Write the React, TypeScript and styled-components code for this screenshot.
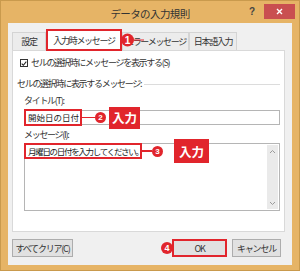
import React from 'react';
import styled, { createGlobalStyle } from 'styled-components';

const RED = '#e1252c';
const FRAME = '#e6b466';

const GlobalStyle = createGlobalStyle`
  html, body {
    margin: 0;
    padding: 0;
    background: #fff;
  }
  body {
    font-family: "Noto Sans CJK JP", "Noto Sans", sans-serif;
    color: #222;
  }
`;

const tabs = [
  { label: '設定', width: 34 },
  { label: '入力時メッセージ', width: 76, active: true },
  { label: 'エラーメッセージ', width: 67 },
  { label: '日本語入力', width: 48 },
];

const App: React.FC = () => {
  return (
    <>
      <GlobalStyle />
      <Window>
        <TitleBar>
          <span />
          <Title>データの入力規則</Title>
          <TitleActions>
            <HelpMark>?</HelpMark>
            <CloseButton>
              <svg width="7" height="7" viewBox="0 0 7 7">
                <path d="M1 1L6 6M6 1L1 6" stroke="#fff" strokeWidth="1.4" />
              </svg>
            </CloseButton>
          </TitleActions>
        </TitleBar>

        <Body>
          <TabRow>
            {tabs.map((tab) => (
              <Tab key={tab.label} $width={tab.width} $active={!!tab.active}>
                {tab.label}
                {tab.active && (
                  <TabCallout>
                    <NumBadge $size={13}>1</NumBadge>
                    <Line $width={10} />
                  </TabCallout>
                )}
              </Tab>
            ))}
          </TabRow>

          <Panel>
            <CheckRow>
              <CheckBox>
                <svg width="7" height="7" viewBox="0 0 7 7">
                  <path d="M0.8 3.6L2.7 5.5L6.2 1.3" stroke="#222" strokeWidth="1.2" fill="none" />
                </svg>
              </CheckBox>
              <LabelText>セルの選択時にメッセージを表示する(S)</LabelText>
            </CheckRow>

            <GroupHeader>
              <LabelText>セルの選択時に表示するメッセージ:</LabelText>
              <GroupLine />
            </GroupHeader>

            <Fields>
              <LabelText>タイトル(T):</LabelText>
              <TitleInput>
                <Marked $width={58} $height={17} $shift={-1}>
                  <MarkText $spacing={0}>開始日の日付</MarkText>
                  <Callout>
                    <Line $width={13} />
                    <NumBadge $size={11}>2</NumBadge>
                    <InputTag $gap={3} $w={31} $h={22}>入力</InputTag>
                  </Callout>
                </Marked>
              </TitleInput>

              <FieldLabel>メッセージ(I):</FieldLabel>
              <MessageArea>
                <MessageBody>
                  <Marked $width={118} $height={16} $shift={-1}>
                    <MarkText $spacing={-1.3}>月曜日の日付を入力してください。</MarkText>
                    <Callout>
                      <Line $width={10} />
                      <NumBadge $size={11}>3</NumBadge>
                      <InputTag $gap={11} $w={35} $h={24}>入力</InputTag>
                    </Callout>
                  </Marked>
                </MessageBody>
                <ScrollBar>
                  <svg width="7" height="5" viewBox="0 0 7 5">
                    <path d="M1 4L3.5 1.5L6 4" stroke="#9a9a9a" strokeWidth="1" fill="none" />
                  </svg>
                  <svg width="7" height="5" viewBox="0 0 7 5">
                    <path d="M1 1L3.5 3.5L6 1" stroke="#9a9a9a" strokeWidth="1" fill="none" />
                  </svg>
                </ScrollBar>
              </MessageArea>
            </Fields>
          </Panel>

          <ButtonRow>
            <DialogButton $width={61}>すべてクリア(C)</DialogButton>
            <RightButtons>
              <DialogButton $width={55} $marked>
                OK
                <OkBadge>
                  <NumBadge $size={12}>4</NumBadge>
                </OkBadge>
              </DialogButton>
              <DialogButton $width={49}>キャンセル</DialogButton>
            </RightButtons>
          </ButtonRow>
        </Body>
      </Window>
    </>
  );
};

const Window = styled.div`
  width: 300px;
  height: 271px;
  box-sizing: border-box;
  background: ${FRAME};
  border: 1px solid #c99a4d;
  display: flex;
  flex-direction: column;
`;

const TitleBar = styled.div`
  height: 22px;
  display: grid;
  grid-template-columns: 1fr auto 1fr;
  align-items: center;
`;

const Title = styled.div`
  font-size: 10.5px;
  letter-spacing: -0.6px;
  color: #333;
  padding-top: 3px;
`;

const TitleActions = styled.div`
  display: flex;
  justify-content: flex-end;
  align-items: flex-start;
  align-self: start;
  gap: 9px;
  padding: 3px 4px 0 0;
`;

const HelpMark = styled.span`
  font-family: "Liberation Sans", sans-serif;
  font-size: 10px;
  font-weight: 700;
  color: #444;
  line-height: 15px;
`;

const CloseButton = styled.div`
  width: 31px;
  height: 15px;
  background: #c94f50;
  display: flex;
  align-items: center;
  justify-content: center;
`;

const Body = styled.div`
  flex: 1;
  margin: 0 7px 5px;
  background: #f0f0f0;
  padding: 6px 7px 0 4px;
  display: flex;
  flex-direction: column;
`;

const TabRow = styled.div`
  display: flex;
  align-items: flex-end;
  height: 21px;
  position: relative;
  z-index: 1;
`;

const Tab = styled.div<{ $width: number; $active: boolean }>`
  position: relative;
  box-sizing: border-box;
  width: ${(p) => p.$width}px;
  height: ${(p) => (p.$active ? 22 : 18)}px;
  margin-bottom: ${(p) => (p.$active ? -1 : 0)}px;
  background: ${(p) => (p.$active ? '#fff' : '#ececec')};
  border: ${(p) => (p.$active ? `2px solid ${RED}` : '1px solid #d4d4d4')};
  border-bottom: ${(p) => (p.$active ? `2px solid ${RED}` : 'none')};
  z-index: ${(p) => (p.$active ? 2 : 0)};
  display: flex;
  align-items: center;
  justify-content: center;
  font-size: 9px;
  letter-spacing: -1.3px;
  white-space: nowrap;
  color: #333;
`;

const TabCallout = styled.div`
  position: absolute;
  left: calc(100% + 1px);
  top: 50%;
  transform: translateY(-50%);
  display: flex;
  align-items: center;
`;

const NumBadge = styled.span<{ $size: number }>`
  width: ${(p) => p.$size}px;
  height: ${(p) => p.$size}px;
  border-radius: 50%;
  background: ${RED};
  color: #fff;
  font-family: "Liberation Sans", sans-serif;
  font-weight: 700;
  font-size: ${(p) => p.$size - 3}px;
  letter-spacing: 0;
  display: flex;
  align-items: center;
  justify-content: center;
  flex-shrink: 0;
`;

const Line = styled.span<{ $width: number }>`
  width: ${(p) => p.$width}px;
  height: 1.5px;
  background: ${RED};
  flex-shrink: 0;
`;

const Panel = styled.div`
  height: 182px;
  box-sizing: border-box;
  background: #fff;
  border: 1px solid #d9d9d9;
  padding: 6px 4px 0 4px;
  display: flex;
  flex-direction: column;
`;

const LabelText = styled.span`
  font-size: 9px;
  letter-spacing: -1.3px;
  line-height: 12px;
  white-space: nowrap;
  color: #333;
`;

const CheckRow = styled.div`
  display: flex;
  align-items: center;
  gap: 3px;
  height: 12px;
  margin-left: 3px;
`;

const CheckBox = styled.span`
  width: 8px;
  height: 8px;
  box-sizing: border-box;
  border: 1px solid #333;
  background: #fff;
  display: flex;
  align-items: center;
  justify-content: center;
`;

const GroupHeader = styled.div`
  display: flex;
  align-items: center;
  margin-top: 9px;
  height: 12px;
`;

const GroupLine = styled.span`
  flex: 1;
  height: 1px;
  background: #dcdcdc;
  margin: 1px 0 0 3px;
`;

const Fields = styled.div`
  display: flex;
  flex-direction: column;
  padding: 5px 0 0 7px;
`;

const FieldLabel = styled(LabelText)`
  margin-top: 4px;
`;

const TitleInput = styled.div`
  margin-top: 3px;
  height: 15px;
  box-sizing: border-box;
  border: 1px solid #b5b5b5;
  display: flex;
  align-items: center;
`;

const Marked = styled.div<{ $width: number; $height: number; $shift: number }>`
  position: relative;
  flex-shrink: 0;
  box-sizing: border-box;
  width: ${(p) => p.$width}px;
  height: ${(p) => p.$height}px;
  margin-left: ${(p) => p.$shift}px;
  border: 2px solid ${RED};
  padding-left: 2px;
  display: flex;
  align-items: center;
`;

const MarkText = styled.span<{ $spacing: number }>`
  font-size: 8.5px;
  letter-spacing: ${(p) => p.$spacing}px;
  line-height: 11px;
  white-space: nowrap;
  color: #222;
`;

const Callout = styled.div`
  position: absolute;
  left: calc(100% + 2px);
  top: 50%;
  transform: translateY(-50%);
  display: flex;
  align-items: center;
`;

const InputTag = styled.span<{ $gap: number; $w: number; $h: number }>`
  margin-left: ${(p) => p.$gap}px;
  width: ${(p) => p.$w}px;
  height: ${(p) => p.$h}px;
  background: ${RED};
  color: #fff;
  font-size: 12.5px;
  font-weight: 700;
  display: flex;
  align-items: center;
  justify-content: center;
`;

const MessageArea = styled.div`
  margin-top: 2px;
  height: 68px;
  box-sizing: border-box;
  border: 1px solid #b5b5b5;
  display: flex;
`;

const MessageBody = styled.div`
  flex: 1;
  display: flex;
  align-items: flex-start;
  margin-top: -1px;
`;

const ScrollBar = styled.div`
  width: 11px;
  margin: 1px 1px 1px 0;
  background: #eaeaea;
  display: flex;
  flex-direction: column;
  align-items: center;
  justify-content: space-between;
  padding: 4px 0 3px;
`;

const ButtonRow = styled.div`
  display: flex;
  justify-content: space-between;
  margin-top: 7px;
  padding-right: 4px;
`;

const RightButtons = styled.div`
  display: flex;
  gap: 5px;
`;

const DialogButton = styled.div<{ $width: number; $marked?: boolean }>`
  position: relative;
  width: ${(p) => p.$width}px;
  height: 18px;
  box-sizing: border-box;
  background: #e1e1e1;
  border: ${(p) => (p.$marked ? `2px solid ${RED}` : '1px solid #adadad')};
  display: flex;
  align-items: center;
  justify-content: center;
  font-size: 9px;
  letter-spacing: -1.2px;
  white-space: nowrap;
  color: #333;
`;

const OkBadge = styled.span`
  position: absolute;
  right: calc(100% + 1px);
  top: 50%;
  transform: translateY(-50%);
`;

export default App;
